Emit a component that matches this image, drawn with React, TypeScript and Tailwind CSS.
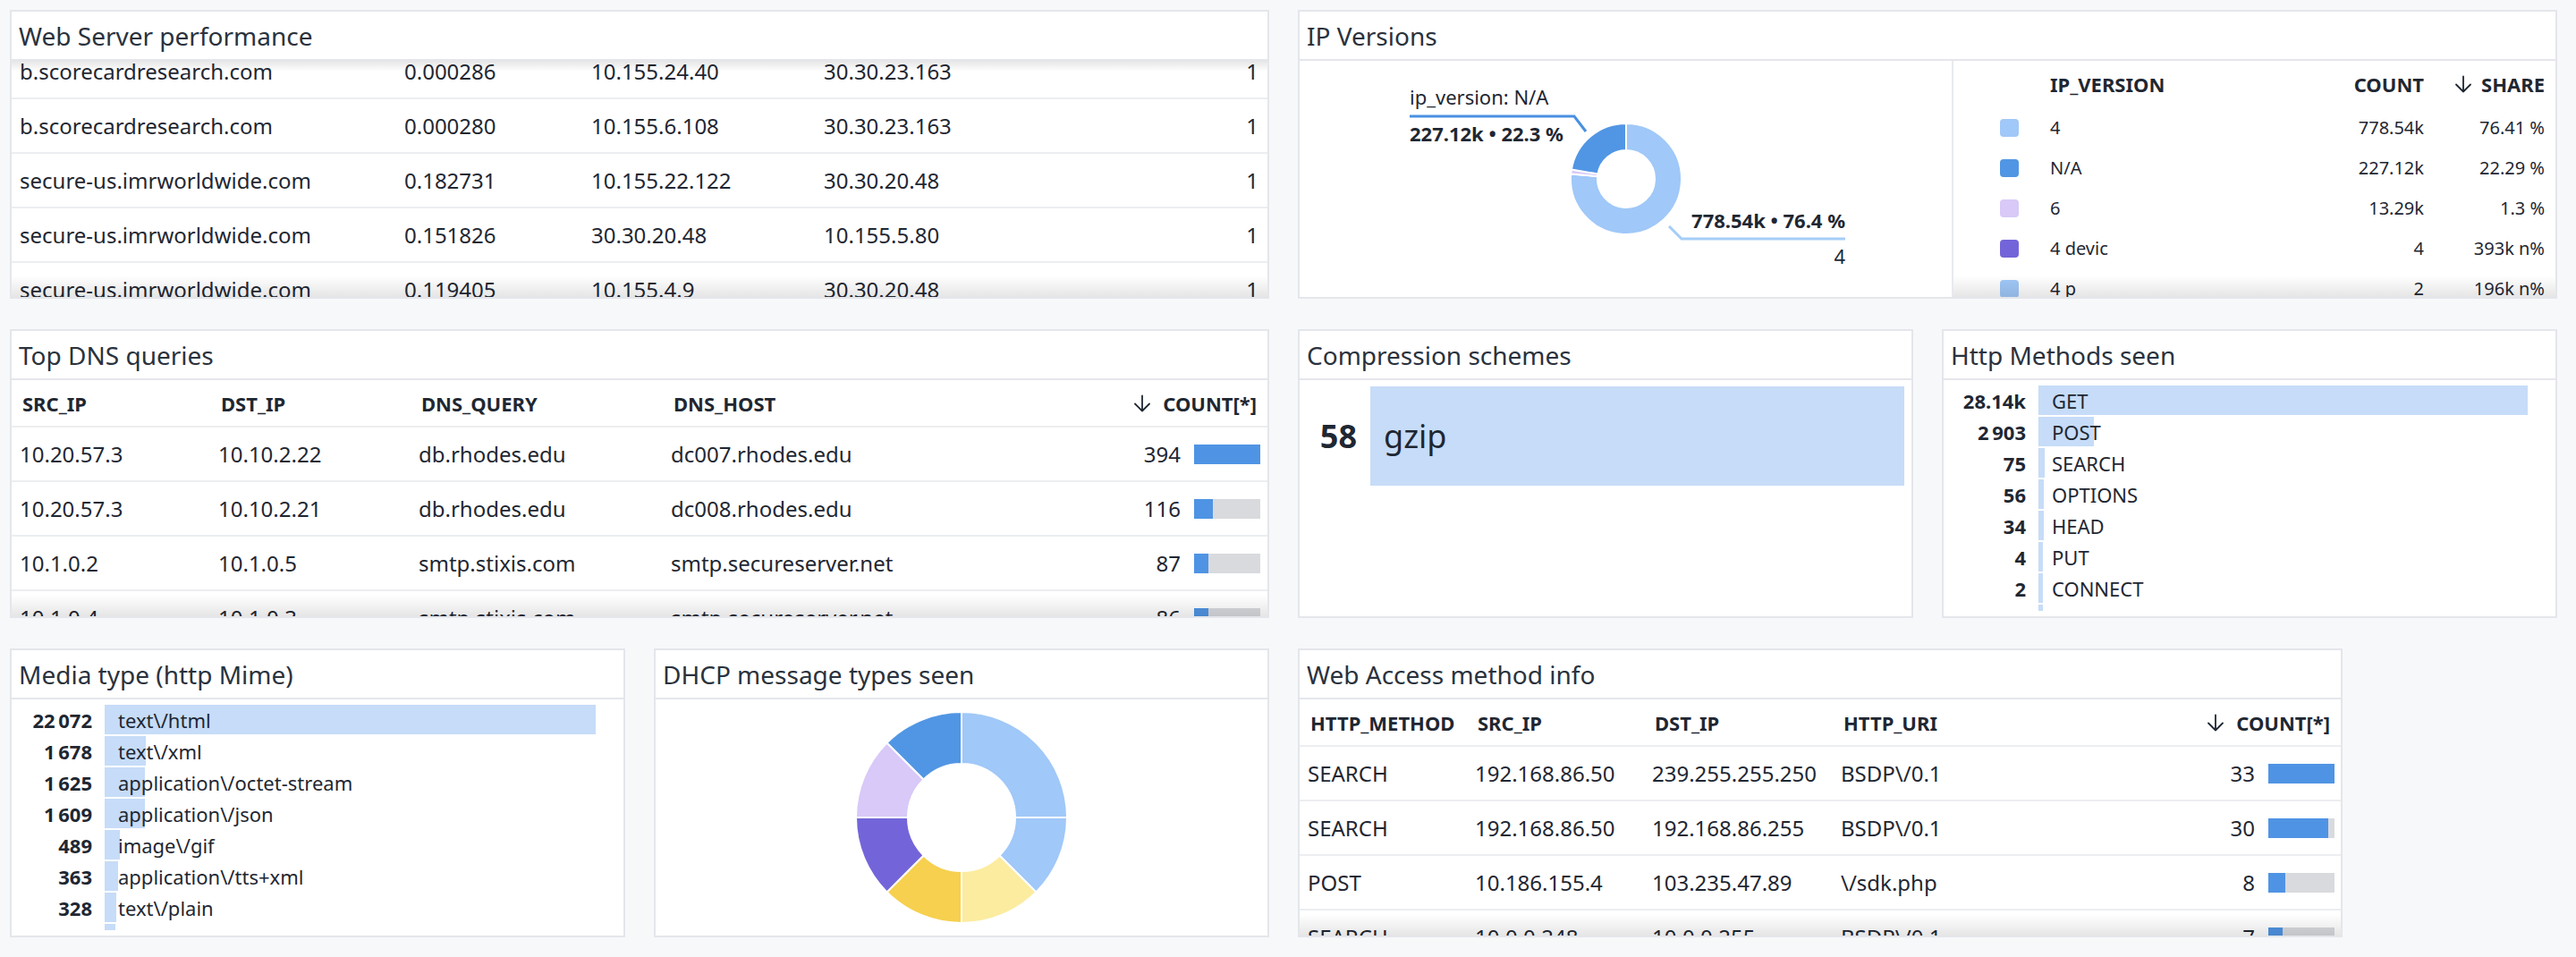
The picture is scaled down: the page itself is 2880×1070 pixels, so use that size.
import React from "react";

type Seg = { from: number; to: number; color: string };

// angles in degrees, clockwise from 12 o'clock
function arcPath(cx: number, cy: number, r0: number, r1: number, a0: number, a1: number) {
  const pt = (r: number, a: number) => {
    const t = ((a - 90) * Math.PI) / 180;
    return [cx + r * Math.cos(t), cy + r * Math.sin(t)];
  };
  const large = a1 - a0 > 180 ? 1 : 0;
  const [x0, y0] = pt(r1, a0);
  const [x1, y1] = pt(r1, a1);
  const [x2, y2] = pt(r0, a1);
  const [x3, y3] = pt(r0, a0);
  return `M${x0} ${y0} A${r1} ${r1} 0 ${large} 1 ${x1} ${y1} L${x2} ${y2} A${r0} ${r0} 0 ${large} 0 ${x3} ${y3} Z`;
}

function Donut({ cx, cy, r0, r1, segs }: { cx: number; cy: number; r0: number; r1: number; segs: Seg[] }) {
  return (
    <g>
      {segs.map((s, i) => (
        <path key={i} d={arcPath(cx, cy, r0, r1, s.from, s.to)} fill={s.color} stroke="#ffffff" strokeWidth="2" />
      ))}
    </g>
  );
}

function Panel({ title, span, children }: { title: string; span: string; children: React.ReactNode }) {
  return (
    <section className={`${span} flex min-h-0 flex-col overflow-hidden border-2 border-[#e4e6eb] bg-white`}>
      <header className="flex h-[55px] shrink-0 items-center border-b-2 border-[#e4e6eb] pl-[8px] text-[28px] leading-none text-[#2a323d]">
        {title}
      </header>
      <div className="relative min-h-0 flex-1 overflow-hidden">{children}</div>
    </section>
  );
}

function SortArrow() {
  return (
    <svg width="20" height="20" viewBox="0 0 20 20" fill="none" stroke="currentColor" strokeWidth="1.8" strokeLinecap="round" strokeLinejoin="round">
      <path d="M10 1.5v17M2 10.5l8 8 8-8" />
    </svg>
  );
}

function CountBar({ value, pct }: { value: number; pct: number }) {
  return (
    <div className="flex items-center justify-end gap-[15px]">
      <span>{value}</span>
      <div className="h-[22px] w-[74px] bg-[#d9dade]">
        <div className="h-full bg-[#4f94e4]" style={{ width: `${pct}%` }} />
      </div>
    </div>
  );
}

function BottomFade() {
  return <div className="pointer-events-none absolute inset-x-0 bottom-0 h-[24px] bg-gradient-to-b from-transparent to-black/10" />;
}

type BarRow = { n: string; label: string; w: number };

function BarList({ rows, numW }: { rows: BarRow[]; numW: string }) {
  return (
    <div className="flex h-full flex-col pt-[6px] pr-[31px] pb-[6px]">
      <div className="flex min-h-0 flex-1 flex-col gap-[2px] overflow-hidden">
        {rows.map((r, i) => (
          <div key={i} className="flex h-[33px] shrink-0 items-center gap-[14px] text-[22px] leading-none">
            <span className={`${numW} shrink-0 text-right font-bold`}>{r.n}</span>
            <div className="relative flex h-full flex-1 items-center">
              <div className="absolute inset-y-0 left-0 bg-[#c6dcf8]" style={{ width: r.w }} />
              <span className="relative pl-[15px]">{r.label}</span>
            </div>
          </div>
        ))}
      </div>
    </div>
  );
}

const webServer = [
  ["b.scorecardresearch.com", "0.000286", "10.155.24.40", "30.30.23.163", "1"],
  ["b.scorecardresearch.com", "0.000280", "10.155.6.108", "30.30.23.163", "1"],
  ["secure-us.imrworldwide.com", "0.182731", "10.155.22.122", "30.30.20.48", "1"],
  ["secure-us.imrworldwide.com", "0.151826", "30.30.20.48", "10.155.5.80", "1"],
  ["secure-us.imrworldwide.com", "0.119405", "10.155.4.9", "30.30.20.48", "1"],
];

const dns = [
  { src: "10.20.57.3", dst: "10.10.2.22", q: "db.rhodes.edu", host: "dc007.rhodes.edu", n: 394, pct: 100 },
  { src: "10.20.57.3", dst: "10.10.2.21", q: "db.rhodes.edu", host: "dc008.rhodes.edu", n: 116, pct: 29 },
  { src: "10.1.0.2", dst: "10.1.0.5", q: "smtp.stixis.com", host: "smtp.secureserver.net", n: 87, pct: 22 },
  { src: "10.1.0.4", dst: "10.1.0.3", q: "smtp.stixis.com", host: "smtp.secureserver.net", n: 86, pct: 21 },
];

const access = [
  { m: "SEARCH", src: "192.168.86.50", dst: "239.255.255.250", uri: "BSDP\\/0.1", n: 33, pct: 100 },
  { m: "SEARCH", src: "192.168.86.50", dst: "192.168.86.255", uri: "BSDP\\/0.1", n: 30, pct: 91 },
  { m: "POST", src: "10.186.155.4", dst: "103.235.47.89", uri: "\\/sdk.php", n: 8, pct: 25 },
  { m: "SEARCH", src: "10.0.0.248", dst: "10.0.0.255", uri: "BSDP\\/0.1", n: 7, pct: 21 },
];

const ipRows = [
  { color: "bg-[#a0c8f8]", v: "4", c: "778.54k", s: "76.41 %" },
  { color: "bg-[#5196e4]", v: "N/A", c: "227.12k", s: "22.29 %" },
  { color: "bg-[#d8c9f8]", v: "6", c: "13.29k", s: "1.3 %" },
  { color: "bg-[#7365d9]", v: "4 devic", c: "4", s: "393k n%" },
  { color: "bg-[#a0c8f8]", v: "4 p", c: "2", s: "196k n%" },
];

const media: BarRow[] = [
  { n: "22\u202F072", label: "text\\/html", w: 550 },
  { n: "1\u202F678", label: "text\\/xml", w: 46 },
  { n: "1\u202F625", label: "application\\/octet-stream", w: 45 },
  { n: "1\u202F609", label: "application\\/json", w: 45 },
  { n: "489", label: "image\\/gif", w: 17 },
  { n: "363", label: "application\\/tts+xml", w: 15 },
  { n: "328", label: "text\\/plain", w: 13 },
  { n: "301", label: "text\\/css", w: 12 },
];

const methods: BarRow[] = [
  { n: "28.14k", label: "GET", w: 547 },
  { n: "2\u202F903", label: "POST", w: 62 },
  { n: "75", label: "SEARCH", w: 7 },
  { n: "56", label: "OPTIONS", w: 6 },
  { n: "34", label: "HEAD", w: 6 },
  { n: "4", label: "PUT", w: 5 },
  { n: "2", label: "CONNECT", w: 5 },
  { n: "1", label: "TRACE", w: 5 },
];

export default function App() {
  return (
    <div className="min-h-screen bg-[#f7f8fa] pt-[11px] pr-[21px] pl-[11px] font-['Noto_Sans',sans-serif] text-[#1f2732]">
      <div className="grid grid-cols-12 grid-rows-[323px_323px_323px] gap-x-[32px] gap-y-[34px]">
        {/* Web Server performance */}
        <Panel title="Web Server performance" span="col-span-6">
          <div className="-mt-[18px] text-[24px] leading-none">
            {webServer.map((r, i) => (
              <div key={i} className="grid h-[61px] grid-cols-[430px_209px_260px_1fr_auto] items-center border-b-2 border-[#eceef1]">
                <span className="pl-[9px]">{r[0]}</span>
                <span className="pl-[9px]">{r[1]}</span>
                <span className="pl-[9px]">{r[2]}</span>
                <span className="pl-[9px]">{r[3]}</span>
                <span className="pr-[10px] text-right">{r[4]}</span>
              </div>
            ))}
          </div>
          <div className="pointer-events-none absolute inset-x-0 top-0 h-[12px] bg-gradient-to-b from-black/10 to-transparent" />
          <BottomFade />
        </Panel>

        {/* IP Versions */}
        <Panel title="IP Versions" span="col-span-6">
          <div className="flex h-full">
            <div className="w-[731px] shrink-0 border-r-2 border-[#e8eaee]">
              <svg width="731" height="263" viewBox="0 0 731 263" className="font-['Noto_Sans',sans-serif]">
                <Donut
                  cx={365}
                  cy={132}
                  r0={32}
                  r1={62}
                  segs={[
                    { from: 0, to: 275.1, color: "#a0c8f8" },
                    { from: 275.1, to: 279.8, color: "#d8c9f8" },
                    { from: 279.8, to: 360, color: "#5196e4" },
                  ]}
                />
                <polyline points="123,62 307,62 320,79" fill="none" stroke="#4a90e2" strokeWidth="3" />
                <polyline points="413,185 427,199 610,199" fill="none" stroke="#a5cdf7" strokeWidth="3" />
                <text x="123" y="49" fontSize="22" fill="#1f2732">ip_version: N/A</text>
                <text x="123" y="90" fontSize="22" fontWeight="700" fill="#1f2732">227.12k • 22.3 %</text>
                <text x="610" y="187" fontSize="22" fontWeight="700" fill="#1f2732" textAnchor="end">778.54k • 76.4 %</text>
                <text x="610" y="227" fontSize="22" fill="#1f2732" textAnchor="end">4</text>
              </svg>
            </div>
            <div className="relative flex-1 pr-[12px]">
              <div className="grid h-[52px] grid-cols-[108px_1fr_150px_135px] items-center text-[22px] font-bold leading-none">
                <span />
                <span>IP_VERSION</span>
                <span className="text-right">COUNT</span>
                <span className="flex items-center justify-end gap-[10px]">
                  <SortArrow />
                  SHARE
                </span>
              </div>
              {ipRows.map((r, i) => (
                <div key={i} className="grid h-[45px] grid-cols-[108px_1fr_150px_135px] items-center text-[20px] leading-none">
                  <span className="pl-[52px]">
                    <span className={`block h-[20px] w-[21px] rounded-[4px] ${r.color}`} />
                  </span>
                  <span>{r.v}</span>
                  <span className="text-right">{r.c}</span>
                  <span className="text-right">{r.s}</span>
                </div>
              ))}
              <BottomFade />
            </div>
          </div>
        </Panel>

        {/* Top DNS queries */}
        <Panel title="Top DNS queries" span="col-span-6">
          <div className="grid h-[53px] grid-cols-[222px_224px_282px_1fr_auto] items-center border-b-2 border-[#eceef1] text-[22px] font-bold leading-none">
            <span className="pl-[12px]">SRC_IP</span>
            <span className="pl-[12px]">DST_IP</span>
            <span className="pl-[12px]">DNS_QUERY</span>
            <span className="pl-[12px]">DNS_HOST</span>
            <span className="flex items-center justify-end gap-[13px] pr-[12px]">
              <SortArrow />
              COUNT[*]
            </span>
          </div>
          <div className="text-[24px] leading-none">
            {dns.map((r, i) => (
              <div key={i} className="grid h-[61px] grid-cols-[222px_224px_282px_1fr_auto] items-center border-b-2 border-[#eceef1]">
                <span className="pl-[9px]">{r.src}</span>
                <span className="pl-[9px]">{r.dst}</span>
                <span className="pl-[9px]">{r.q}</span>
                <span className="pl-[9px]">{r.host}</span>
                <div className="pr-[8px]">
                  <CountBar value={r.n} pct={r.pct} />
                </div>
              </div>
            ))}
          </div>
          <BottomFade />
        </Panel>

        {/* Compression schemes */}
        <Panel title="Compression schemes" span="col-span-3">
          <div className="flex gap-[15px] pt-[7px] pr-[8px] text-[36px] leading-none">
            <div className="flex w-[64px] shrink-0 items-center justify-end font-bold">58</div>
            <div className="flex h-[111px] flex-1 items-center bg-[#c6dcf8] pl-[15px]">gzip</div>
          </div>
        </Panel>

        {/* Http Methods seen */}
        <Panel title="Http Methods seen" span="col-span-3">
          <BarList rows={methods} numW="w-[92px]" />
        </Panel>

        {/* Media type */}
        <Panel title="Media type (http Mime)" span="col-span-3">
          <BarList rows={media} numW="w-[90px]" />
        </Panel>

        {/* DHCP message types seen */}
        <Panel title="DHCP message types seen" span="col-span-3">
          <div className="flex h-full items-center justify-center">
            <svg width="240" height="240" viewBox="0 0 240 240">
              <Donut
                cx={120}
                cy={120}
                r0={60}
                r1={118}
                segs={[
                  { from: 0, to: 90, color: "#a0c8f8" },
                  { from: 90, to: 135, color: "#a0c8f8" },
                  { from: 135, to: 180, color: "#fcec9f" },
                  { from: 180, to: 225, color: "#f6d04e" },
                  { from: 225, to: 270, color: "#7365d9" },
                  { from: 270, to: 315, color: "#d8c9f8" },
                  { from: 315, to: 360, color: "#5196e4" },
                ]}
              />
            </svg>
          </div>
        </Panel>

        {/* Web Access method info */}
        <Panel title="Web Access method info" span="col-span-5">
          <div className="grid h-[53px] grid-cols-[187px_198px_211px_1fr_auto] items-center border-b-2 border-[#eceef1] text-[22px] font-bold leading-none">
            <span className="pl-[12px]">HTTP_METHOD</span>
            <span className="pl-[12px]">SRC_IP</span>
            <span className="pl-[12px]">DST_IP</span>
            <span className="pl-[12px]">HTTP_URI</span>
            <span className="flex items-center justify-end gap-[13px] pr-[12px]">
              <SortArrow />
              COUNT[*]
            </span>
          </div>
          <div className="text-[24px] leading-none">
            {access.map((r, i) => (
              <div key={i} className="grid h-[61px] grid-cols-[187px_198px_211px_1fr_auto] items-center border-b-2 border-[#eceef1]">
                <span className="pl-[9px]">{r.m}</span>
                <span className="pl-[9px]">{r.src}</span>
                <span className="pl-[9px]">{r.dst}</span>
                <span className="pl-[9px]">{r.uri}</span>
                <div className="pr-[7px]">
                  <CountBar value={r.n} pct={r.pct} />
                </div>
              </div>
            ))}
          </div>
          <BottomFade />
        </Panel>
      </div>
    </div>
  );
}
